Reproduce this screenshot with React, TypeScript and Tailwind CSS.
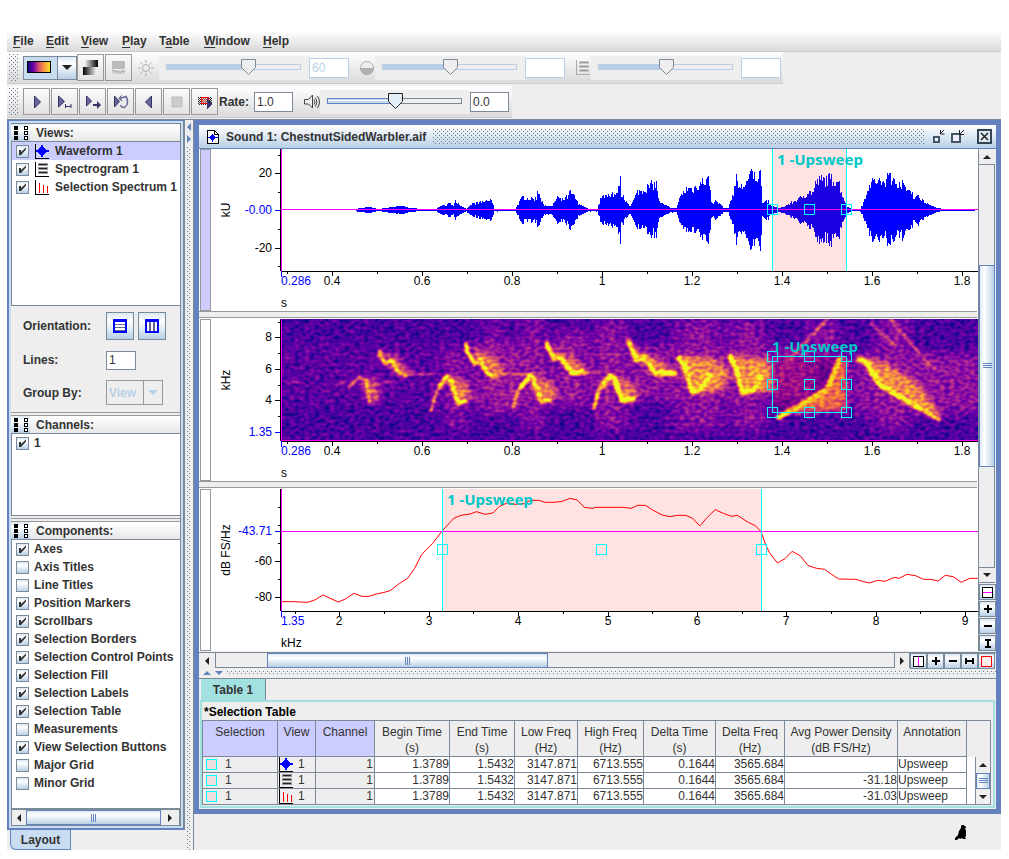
import type { ReactNode } from "react";

const FILL = "bg-[linear-gradient(#dde8f3,#ffffff_30%,#dde8f3_65%,#b8cfe5)]";
const FILL_X = "bg-[linear-gradient(90deg,#dde8f3,#ffffff_30%,#dde8f3_65%,#b8cfe5)]";
const DOTS =
  "bg-[conic-gradient(from_270deg_at_1px_1px,#6a7a8c_90deg,transparent_0),conic-gradient(from_270deg_at_1px_1px,#6a7a8c_90deg,transparent_0)] bg-[size:4px_4px] bg-[position:0_0,2px_2px]";
const BAR = "flex items-center border-b border-[#cccccc] bg-[linear-gradient(#ffffff,#dadada)]";

/* ---------- icons ---------- */

function WaveIcon() {
  return (
    <svg width="15" height="15" viewBox="0 0 15 15" shapeRendering="crispEdges" className="shrink-0">
      <path d="M.5 0v14.5H14" fill="none" stroke="#000" />
      <path d="M1 6h2V5h1V4h1V3h1V1h2v2h1v1h1v1h1v1h3v2h-3v1h-1v1H9v1H8v2H6v-2H5v-1H4V9H3V8H1z" fill="#00f" />
    </svg>
  );
}

function SpectroIcon({ dim = false }: { dim?: boolean }) {
  return (
    <svg width="15" height="15" viewBox="0 0 15 15" shapeRendering="crispEdges" className="shrink-0">
      <path d="M.5 0v14.5H14" fill="none" stroke={dim ? "#aaa" : "#000"} />
      <path d="M3 2.5h10M3 6.5h10M3 10.5h10" stroke={dim ? "#c8c8c8" : "#999"} strokeWidth="3" />
      <path d="M4 2.5h8M4 6.5h8M4 10.5h8" stroke={dim ? "#999" : "#222"} />
    </svg>
  );
}

function SpectrumIcon() {
  return (
    <svg width="15" height="15" viewBox="0 0 15 15" shapeRendering="crispEdges" className="shrink-0">
      <path d="M.5 0v14.5H14" fill="none" stroke="#000" />
      <path d="M4.5 3v10M8.500 5v8M12.500 6v7" stroke="#f00" />
    </svg>
  );
}

function Tri({ dir, color = "#222" }: { dir: "up" | "down" | "left" | "right"; color?: string }) {
  const d = {
    up: "M0 6h8L4 2z",
    down: "M0 2h8L4 6z",
    left: "M6 0v8L2 4z",
    right: "M2 0v8l4-4z",
  }[dir];
  return (
    <svg width="8" height="8" viewBox="0 0 8 8" className="shrink-0">
      <path d={d} fill={color} />
    </svg>
  );
}

function ListIcon() {
  return (
    <svg width="19" height="17" viewBox="0 0 19 17" shapeRendering="crispEdges">
      <path d="M3 2h4v4H3zM3 7h4v4H3zM3 12h4v4H3z" fill="#000" />
      <path d="M13.500 2.500h3v3h-3zM13.500 7.500h3v3h-3zM13.500 12.500h3v3h-3z" fill="#fff" stroke="#000" />
    </svg>
  );
}

/* ---------- controls ---------- */

function Check({ label, checked, icon, selected = false }: { label: string; checked: boolean; icon?: ReactNode; selected?: boolean }) {
  return (
    <label className={"flex h-[18px] items-center pl-1 whitespace-nowrap " + (selected ? "bg-[#ccccff]" : "")}>
      <span className="grid">
        <input
          type="checkbox"
          defaultChecked={checked}
          className={"peer col-start-1 row-start-1 size-[13px] appearance-none border border-[#7a8a99] " + FILL}
        />
        <svg width="13" height="13" viewBox="0 0 13 13" className="pointer-events-none invisible col-start-1 row-start-1 peer-checked:visible">
          <path d="M3 5h2v2l5-4.500v2L5 10H3z" fill="#333" />
        </svg>
      </span>
      {icon && <span className="ml-[6px]">{icon}</span>}
      <span className="ml-[5px]">{label}</span>
    </label>
  );
}

function Slider({ label, pos, active = false }: { label: string; pos: number; active?: boolean }) {
  return (
    <span className="grid h-6 w-[150px] bg-[#eeeeee]">
      <svg width="150" height="24" viewBox="0 0 150 24" className="col-start-1 row-start-1" shapeRendering="crispEdges">
        {active ? (
          <>
            <path d="M7.500 8.500h134v5H7.500z" fill="#eee" stroke="#7a8a99" />
            <path d={`M7.500 8.500H${pos}v5H7.500z`} fill="#c8dcf0" stroke="#6382bf" />
            <path d={`M8 10.500H${pos}`} stroke="#fff" />
          </>
        ) : (
          <>
            <path d="M7.500 8.500h134v5H7.500z" fill="#eee" stroke="#b8cfe5" />
            <path d={`M7 8H${pos}v6H7z`} fill="#b8cfe5" />
          </>
        )}
        <path
          d={`M${pos - 7} 3.500h14v8l-7 7-7-7z`}
          fill={active ? "#e4eef8" : "#eee"}
          stroke={active ? "#222" : "#7a8a99"}
          shapeRendering="auto"
        />
      </svg>
      <input type="range" aria-label={label} disabled={!active} className="col-start-1 row-start-1 h-6 w-full opacity-0" />
    </span>
  );
}

function ToolButton({ label, children }: { label: string; children: ReactNode }) {
  return (
    <button aria-label={label} className="mr-px grid size-[27px] place-items-center border border-[#999999] bg-[linear-gradient(#fafafa,#e2e2e2)]">
      {children}
    </button>
  );
}

function MiniButton({ label, children }: { label: string; children: ReactNode }) {
  return (
    <button aria-label={label} className={"grid h-4 w-[17px] shrink-0 place-items-center border border-[#7a8a99] " + FILL}>
      <svg width="13" height="13" viewBox="0 0 13 13" shapeRendering="crispEdges">
        {children}
      </svg>
    </button>
  );
}

const MINI = {
  splitV: (
    <>
      <path d="M1.500 1.500h10v10h-10z" fill="#fff" stroke="#000" />
      <path d="M6.500 2v9" stroke="#f0f" />
    </>
  ),
  splitH: (
    <>
      <path d="M1.500 1.500h10v10h-10z" fill="#fff" stroke="#000" />
      <path d="M2 6.500h9" stroke="#f0f" />
    </>
  ),
  plus: <path d="M3 6h8M7 2v8" stroke="#000" strokeWidth="2" />,
  minus: <path d="M3 6h8" stroke="#000" strokeWidth="2" />,
  fitH: <path d="M3 3v6M10 3v6M4 6h5" stroke="#000" strokeWidth="2" />,
  fitV: <path d="M4 3h6M4 10h6M7 4v5" stroke="#000" strokeWidth="2" />,
  red: <path d="M1.500 1.500h10v10h-10z" fill="#fee" stroke="#f00" />,
};

/* ---------- toolbars ---------- */

const MENUS = [
  ["", "F", "ile", "w-[33px]"],
  ["", "E", "dit", "w-[35px]"],
  ["", "V", "iew", "w-[41px]"],
  ["", "P", "lay", "w-[37px]"],
  ["T", "a", "ble", "w-[45px]"],
  ["", "W", "indow", "w-[59px]"],
  ["", "H", "elp", "w-[40px]"],
];

function MenuBar() {
  return (
    <nav className={BAR + " h-[21px] pl-[6px]"}>
      {MENUS.map(([pre, key, post, width]) => (
        <button key={key + post} className={"text-left " + width}>
          {pre}
          <u className="underline-offset-2">{key}</u>
          {post}
        </button>
      ))}
    </nav>
  );
}

function ColorBar() {
  return (
    <div className={BAR + " h-8 w-fit pr-[2px] pl-[2px]"}>
      <span className={"mr-1 h-7 w-[10px] " + DOTS} />
      <button aria-label="Color map" className="flex h-6 w-[54px] border border-[#7a8a99] bg-[#c8dcf0]">
        <span className="mt-1 ml-[3px] h-3 w-6 border border-black bg-[linear-gradient(90deg,#0d0887,#7201a8,#d8576b,#fb9f3a,#f5e326)]" />
        <span className={"ml-auto grid h-full w-[19px] place-items-center border-l border-[#7a8a99] " + FILL}>
          <svg width="10" height="5">
            <path d="M0 0h10L5 5z" fill="#222" />
          </svg>
        </span>
      </button>
      <ToolButton label="Grayscale">
        <svg width="15" height="15">
          <defs>
            <linearGradient id="g1">
              <stop stopColor="#fff" />
              <stop offset="1" />
            </linearGradient>
            <linearGradient id="g2">
              <stop />
              <stop offset="1" stopColor="#fff" />
            </linearGradient>
          </defs>
          <path d="M1 0h14v7H1z" fill="url(#g1)" />
          <path d="M0 7h14v8H0z" fill="url(#g2)" />
        </svg>
      </ToolButton>
      <ToolButton label="Smoothing">
        <svg width="15" height="15">
          <path d="M1 1h13v8H1z" fill="#bbb" />
          <path d="M1 10h13v4H1z" fill="#d2d2d2" />
          <path d="M1 11l2-1 2 2 2-1 2 2 2-2 3 1" fill="none" stroke="#aaa" />
        </svg>
      </ToolButton>
      <svg width="16" height="16" viewBox="0 0 16 16" className="mx-[5px]" fill="none" stroke="#b0b0b0">
        <circle cx="8" cy="8" r="3.500" />
        <path d="M8 0v3M8 13v3M0 8h3M13 8h3M2.500 2.500l2 2M11.500 11.500l2 2M13.500 2.500l-2 2M4.500 11.500l-2 2" />
      </svg>
      <Slider label="Brightness" pos={89.5} />
      <input aria-label="Brightness value" defaultValue="60" disabled className="h-5 w-10 border border-[#b8cfe5] bg-white pl-[2px] font-normal text-[#b8cfe5]" />
      <svg width="26" height="16" viewBox="0 0 26 16">
        <circle cx="18" cy="8" r="6.500" fill="#eee" stroke="#b0b0b0" />
        <path d="M11 8h14a7 7 0 0 1-14 0z" fill="#b0b0b0" />
      </svg>
      <Slider label="Contrast" pos={75.5} />
      <input aria-label="Contrast value" disabled className="h-5 w-10 border border-[#b8cfe5] bg-white" />
      <span className="w-[26px] pl-[11px]">
        <SpectroIcon dim />
      </span>
      <Slider label="Spectrogram window size" pos={75.5} />
      <input aria-label="Window size value" disabled className="h-5 w-10 border border-[#b8cfe5] bg-white" />
    </div>
  );
}

const PLAY = "#666699";

function PlayBar() {
  return (
    <div className={BAR + " mt-[2px] h-8 w-fit pr-[3px] pl-[2px]"}>
      <span className={"mr-1 h-7 w-[10px] " + DOTS} />
      <ToolButton label="Play">
        <svg width="16" height="16">
          <path d="M5.500 2v12l6-6z" fill={PLAY} stroke="#336" />
        </svg>
      </ToolButton>
      <ToolButton label="Play selection">
        <svg width="16" height="16">
          <path d="M1.500 2v11l6-5.500z" fill={PLAY} stroke="#336" />
          <path d="M8.500 10v4M8 12.500h6M14 10v4" stroke="#336" fill="none" />
        </svg>
      </ToolButton>
      <ToolButton label="Play visible">
        <svg width="16" height="16">
          <path d="M1.500 2v10l5-5z" fill={PLAY} stroke="#336" />
          <path d="M8 10h4V7l4 4-4 4v-3H8z" fill="#336" />
        </svg>
      </ToolButton>
      <ToolButton label="Loop">
        <svg width="16" height="16">
          <path d="M1.500 2v11l5-5.500z" fill={PLAY} stroke="#336" />
          <path d="M8.500 1.500L6 4.500l3 2.500" fill="none" stroke="#336" />
          <path d="M7 4.500l6-2c2 3 2.500 8-1 10.500-2 1-4 0-4.500-2" fill="none" stroke="#669" strokeWidth="1.500" />
        </svg>
      </ToolButton>
      <ToolButton label="Play backwards">
        <svg width="16" height="16">
          <path d="M10.500 2v12L4.500 8z" fill={PLAY} stroke="#336" />
        </svg>
      </ToolButton>
      <ToolButton label="Stop">
        <svg width="16" height="16">
          <path d="M3 3h10v10H3z" fill="#ccc" stroke="#bbb" />
        </svg>
      </ToolButton>
      <ToolButton label="Scrolling playback">
        <svg width="16" height="16" shapeRendering="crispEdges">
          <defs>
            <pattern id="chk" width="2" height="2" patternUnits="userSpaceOnUse">
              <path d="M0 0h1v1H0zM1 1h1v1H1z" fill="#222" />
            </pattern>
          </defs>
          <path d="M1 3h14v8H1z" fill="url(#chk)" />
          <path d="M4.500 3.500h7v6h-7z" fill="#f88" fillOpacity=".5" stroke="#f00" />
          <path d="M10 5v10l5-5z" fill="#336" />
        </svg>
      </ToolButton>
      <label className="flex items-center">
        <span className="w-[35px]">Rate:</span>
        <input defaultValue="1.0" className="h-5 w-[39px] border border-[#7a8a99] bg-white pl-[2px] font-normal text-[#333333]" />
      </label>
      <svg width="27" height="16" viewBox="0 0 27 16" fill="none" stroke="#444">
        <path d="M11.500 5.500h4L19.500 1v13l-4-4h-4z" fill="#eee" />
        <path d="M21 5.500q2 2.500 0 5M22.500 3.500q3 4.500 0 9M24.500 2q4 6 0 12" />
      </svg>
      <Slider label="Volume" pos={75.5} active />
      <input aria-label="Volume value" defaultValue="0.0" className="h-5 w-[39px] border border-[#7a8a99] bg-white pl-[2px] font-normal text-[#333333]" />
    </div>
  );
}

/* ---------- layout panel ---------- */

function SectionHead({ title }: { title: string }) {
  return (
    <div className="flex h-[17px] items-center bg-[linear-gradient(#ffffff,#e8e8e8)]">
      <span className={"w-[19px] " + FILL}>
        <ListIcon />
      </span>
      <span className="ml-[6px]">{title}</span>
    </div>
  );
}

const COMPONENTS: [string, boolean][] = [
  ["Axes", true],
  ["Axis Titles", false],
  ["Line Titles", false],
  ["Position Markers", true],
  ["Scrollbars", true],
  ["Selection Borders", true],
  ["Selection Control Points", true],
  ["Selection Fill", true],
  ["Selection Labels", true],
  ["Selection Table", true],
  ["Measurements", false],
  ["View Selection Buttons", true],
  ["Major Grid", false],
  ["Minor Grid", false],
];

const LIST = "border-y border-l border-[#7a8a99] bg-white";

function LayoutPanel() {
  return (
    <aside className="w-[178px] shrink-0">
      <div className="border-2 border-t border-[#6382bf] border-r-[#7a8a99] bg-[#c8dcf2] p-[2px]">
        <div className="border-t border-r border-[#7a8a99] bg-[#eeeeee]">
          <SectionHead title="Views:" />
          <div className={LIST + " h-[165px]"}>
            <Check label="Waveform 1" checked selected icon={<WaveIcon />} />
            <Check label="Spectrogram 1" checked icon={<SpectroIcon />} />
            <Check label="Selection Spectrum 1" checked icon={<SpectrumIcon />} />
          </div>
          <div className="h-[106px] space-y-[10px] pt-[6px] pl-3">
            <div className="flex h-7 items-center">
              <span className="w-[83px]">Orientation:</span>
              <button aria-label="Rows" className={"mr-1 grid size-7 place-items-center border border-[#7a8a99] " + FILL}>
                <svg width="14" height="14" shapeRendering="crispEdges">
                  <path d="M1 1h12v12H1z" fill="#fff" stroke="#00f" strokeWidth="2" />
                  <path d="M2 5.500h10M2 8.500h10M2 11.500h10" stroke="#669" />
                  <path d="M1 2h12" stroke="#00f" strokeWidth="2" />
                </svg>
              </button>
              <button aria-label="Columns" className={"grid size-7 place-items-center border border-[#7a8a99] " + FILL}>
                <svg width="14" height="14" shapeRendering="crispEdges">
                  <path d="M1 1h12v12H1z" fill="#fff" stroke="#00f" strokeWidth="2" />
                  <path d="M5 3v9M9 3v9" stroke="#669" strokeWidth="2" />
                  <path d="M1 2h12" stroke="#00f" strokeWidth="2" />
                </svg>
              </button>
            </div>
            <label className="flex h-5 items-center">
              <span className="w-[83px]">Lines:</span>
              <input defaultValue="1" className="h-[19px] w-[30px] border border-[#7a8a99] bg-white pl-[2px] font-normal" />
            </label>
            <label className="flex h-[25px] items-center">
              <span className="w-[83px]">Group By:</span>
              <span className="grid">
                <select disabled className="col-start-1 row-start-1 h-[25px] w-[57px] appearance-none border border-[#999999] bg-[#eeeeee] pl-[2px] font-bold text-[#b8cfe5] opacity-100">
                  <option>View</option>
                </select>
                <span className="pointer-events-none col-start-1 row-start-1 grid h-[25px] w-5 place-items-center justify-self-end border border-[#999999]">
                  <svg width="10" height="5">
                    <path d="M0 0h10L5 5z" fill="#b8cfe5" />
                  </svg>
                </span>
              </span>
            </label>
          </div>
          <div className="h-1 border-y border-[#999999]" />
          <SectionHead title="Channels:" />
          <div className={LIST + " h-[83px]"}>
            <Check label="1" checked />
          </div>
          <div className="mt-[2px] h-1 border-y border-[#999999]" />
          <SectionHead title="Components:" />
          <div className={LIST + " h-[270px]"}>
            {COMPONENTS.map(([label, on]) => (
              <Check key={label} label={label} checked={on} />
            ))}
          </div>
          <div className="flex h-[17px] border border-[#7a8a99]">
            <button aria-label="Scroll left" className="grid w-[14px] place-items-center">
              <Tri dir="left" />
            </button>
            <span className={"grid flex-1 place-items-center border border-[#6382bf] " + FILL}>
              <GripV />
            </span>
            <button aria-label="Scroll right" className="grid w-[18px] place-items-center">
              <Tri dir="right" />
            </button>
          </div>
        </div>
      </div>
      <button className="ml-[3px] block h-5 w-[61px] rounded-bl-md border border-t-0 border-[#6382bf] bg-[#c8dcf2]">Layout</button>
    </aside>
  );
}

function GripV() {
  return (
    <svg width="6" height="8" shapeRendering="crispEdges">
      <path d="M.5 0v8M2.500 0v8M4.500 0v8" stroke="#6382bf" />
    </svg>
  );
}

/* ---------- plots ---------- */

const LABEL = "font-['Noto_Sans',sans-serif] text-[15px] font-bold";

function AxisX({ y, start, ticks, minors, unit }: { y: number; start: string; ticks: [number, string][]; minors: number[]; unit: string }) {
  return (
    <g>
      <g shapeRendering="crispEdges" stroke="#000">
        <path d={`M281 ${y + 0.5}H978`} />
        {ticks.map(([x]) => (
          <path key={x} d={`M${x + 0.5} ${y}v5`} />
        ))}
        {minors.map((x) => (
          <path key={x} d={`M${x + 0.5} ${y}v3`} />
        ))}
        <path d={`M281.500 ${y}v6`} stroke="#00f" />
      </g>
      <text x="281" y={y + 14} fill="#00f">
        {start}
      </text>
      {ticks.map(([x, t]) => (
        <text key={x} x={x} y={y + 14} textAnchor="middle">
          {t}
        </text>
      ))}
      <text x="281" y={y + 36}>
        {unit}
      </text>
    </g>
  );
}

function AxisY({ y, h, ticks, minors, unit }: { y: number; h: number; ticks: [number, string, boolean?][]; minors: number[]; unit: string }) {
  return (
    <g>
      <g shapeRendering="crispEdges" stroke="#000">
        <path d={`M280.500 ${y}v${h}`} />
        <path d={`M281.500 ${y}v${h}`} stroke="#f0f" />
        {ticks.map(([ty, t, blue]) => (
          <path key={t} d={`M275 ${ty + 0.5}h5`} stroke={blue ? "#00f" : "#000"} />
        ))}
        {minors.map((ty) => (
          <path key={ty} d={`M278 ${ty + 0.5}h2`} />
        ))}
      </g>
      {ticks.map(([ty, t, blue]) => (
        <text key={t} x="272" y={ty + 4} textAnchor="end" fill={blue ? "#00f" : "#000"}>
          {t}
        </text>
      ))}
      <text transform={`translate(230 ${y + h / 2}) rotate(-90)`} textAnchor="middle">
        {unit}
      </text>
    </g>
  );
}

function Handle({ x, y }: { x: number; y: number }) {
  return <rect x={x - 4.5} y={y - 4.5} width="10" height="10" fill="none" stroke="#0ff" shapeRendering="crispEdges" />;
}

function Plot({ box, children, color, last = false }: { box: string; children: ReactNode; color: string; last?: boolean }) {
  return (
    <>
      <div className="flex bg-white pl-px">
        <span className={"w-[11px] shrink-0 border border-[#999999] " + color} />
        <svg viewBox={box} preserveAspectRatio="xMinYMin" className="h-[162px] min-w-0 flex-1 font-['Liberation_Sans',sans-serif] text-[12px] font-normal">
          {children}
        </svg>
      </div>
      {!last && (
        <div className="h-2 bg-white pb-px">
          <div className="mr-px h-full border-y border-[#999999] bg-[#eeeeee]" />
        </div>
      )}
    </>
  );
}

const TIME_TICKS: [number, string][] = [
  [332, "0.4"],
  [422, "0.6"],
  [512, "0.8"],
  [602, "1"],
  [692, "1.2"],
  [782, "1.4"],
  [872, "1.6"],
  [962, "1.8"],
];
const TIME_MINORS = [287, 377, 467, 557, 647, 737, 827, 917];

const ENVELOPE: [number, number][] = [
  [356, 0.5], [358, 1.5], [370, 2.5], [377, 0.5], [381, 1], [395, 3], [403, 3.5], [410, 1.2], [433, 0.5], [436, 1], [441, 4], [448, 6], [453, 6], [455, 11], [457, 7], [460, 4], [466, 1],
  [472, 7], [480, 8], [487, 11], [492, 9], [494, 1], [503, 1], [512, 0.5], [515, 1], [522, 14], [530, 12], [536, 13], [537, 21], [539, 21], [541, 9], [546, 4],
  [552, 4], [557, 15], [561, 10], [568, 15], [570, 21], [572, 15], [574, 15], [578, 6], [588, 1], [597, 1], [600, 12], [604, 16], [612, 19], [617, 16], [618, 32], [620, 32],
  [621, 18], [624, 12], [630, 4], [633, 10], [637, 20], [645, 24], [652, 28], [656, 29], [659, 8], [670, 2], [676, 2], [681, 17], [687, 24], [693, 24],
  [700, 30], [706, 34], [709, 33], [711, 8], [716, 10], [723, 2], [728, 2], [732, 16], [736, 34], [740, 24], [745, 30], [749, 34], [751, 44], [754, 38],
  [760, 40], [762, 9], [768, 10], [771, 4], [778, 1.5], [784, 3], [793, 9], [800, 13], [808, 20], [813, 20], [816, 32], [823, 34], [830, 35], [838, 34],
  [841, 20], [847, 3], [851, 1], [860, 1], [863, 8], [868, 28], [875, 33], [880, 32], [885, 26], [887, 42], [890, 42], [892, 32], [900, 31], [907, 22], [911, 23],
  [913, 14], [918, 15], [925, 9], [931, 4], [938, 1.2], [946, 0.6], [975, 0.5],
];

function buildWave() {
  let seed = 7;
  const rand = () => {
    seed = (seed * 16807) % 2147483647;
    return seed / 2147483647;
  };
  let k = 0;
  let d = "";
  for (let x = 356; x < 975; x++) {
    while (k < ENVELOPE.length - 2 && ENVELOPE[k + 1][0] <= x) k++;
    const [x0, a0] = ENVELOPE[k];
    const [x1, a1] = ENVELOPE[k + 1];
    const amp = a0 + ((a1 - a0) * (x - x0)) / (x1 - x0);
    const h = amp * (amp > 5 ? 0.66 + 0.4 * rand() : 1);
    d += `M${x}.5 ${(209.5 - h).toFixed(0)}V${(210.5 + h * (0.92 + 0.1 * rand())).toFixed(0)}`;
  }
  return d;
}
const WAVE = buildWave();

function WaveformPlot() {
  return (
    <Plot box="211 149 767 162" color="bg-[#ccccff]">
      <path d={WAVE} stroke="#00f" shapeRendering="crispEdges" />
      <path d="M773 149h74v122h-74z" fill="#f00" fillOpacity=".115" />
      <path d="M282 209.500H978" stroke="#f0f" shapeRendering="crispEdges" />
      <path d="M772.500 149v122M846.500 149v122" stroke="#0ff" shapeRendering="crispEdges" />
      <Handle x={772} y={209} />
      <Handle x={809} y={209} />
      <Handle x={846} y={209} />
      <text x="777" y="165" className={LABEL} fill="#00c8c8">
        1 -Upsweep
      </text>
      <AxisY y={149} h={122} unit="kU" ticks={[[173, "20"], [210, "-0.00", true], [248, "-20"]]} minors={[155, 192, 229, 266]} />
      <AxisX y={271} start="0.286" ticks={TIME_TICKS} minors={TIME_MINORS} unit="s" />
    </Plot>
  );
}

const NOTES_A = [
  ["M205 235L240 200 258 212 270 280", 9, 0.55],
  ["M452 305L470 245 500 200", 9, 0.68],
  ["M478 230L500 200 512 208 535 280 560 270", 13, 0.85],
  ["M698 295L715 240 750 198", 10, 0.75],
  ["M722 232L750 198 758 202 785 272 812 268", 14, 0.92],
  ["M942 298L955 245 992 200", 11, 0.8],
  ["M962 232L992 198 1002 205 1028 272 1066 264", 16, 0.95],
  ["M297 120L300 138 318 160 335 150 355 188 380 198", 11, 0.78],
  ["M380 194L465 190", 5, 0.4],
  ["M557 98L562 125 585 162 600 148 620 185 642 203", 13, 0.85],
  ["M642 192L800 190", 5, 0.45],
  ["M798 98L822 145 845 145 875 188 915 186", 14, 0.92],
  ["M915 188L970 186", 5, 0.5],
  ["M1045 90L1070 150 1092 140 1125 190 1190 190", 15, 0.92],
  ["M20 216L70 216M170 217L205 217M300 217L345 217", 5, 0.38],
] as const;

const NOTES_B = [
  ["M145 138L165 172 188 246 220 232 243 192", 15, 0.98],
  ["M298 135L320 182 338 248 375 235 392 195", 15, 0.98],
  ["M440 325L520 282 590 240 612 190 632 142", 15, 0.95],
  ["M680 146L712 156 728 190 752 225 820 266 875 298", 15, 1],
  ["M875 298L932 330", 12, 0.8],
  ["M475 150L595 25M778 25L850 110 915 180", 10, 0.36],
  ["M720 40L800 110", 9, 0.26],
] as const;

const GLOW_A =
  "M240 200L262 210 290 205 300 270 270 282zM500 200L560 215 580 265 535 285zM750 198L820 215 835 265 785 278zM992 198L1060 220 1080 262 1030 276z" +
  "M300 125L350 140 400 195 355 190 318 160zM560 105L640 140 675 190 640 205 600 150zM800 98L880 145 930 188 875 190 845 148z";
const GLOW_B =
  "M145 138L250 145 300 190 275 240 190 250zM298 135L420 150 430 240 338 250zM0 110L80 150 140 190 75 192zM450 318L590 240 635 140 650 150 650 300 470 310zM690 146L770 160 860 220 930 310 925 328 750 225z";
const HAZE =
  "M730 30h60v330h-60zM950 30h90v330h-90zM590 100h130v210H590zM830 60h90v230H830zM620 30h40v80h-40zM500 120h50v240h-50z" +
  "M1050 110h560v160H1050zM1210 30h110v330h-110zM1355 30h95v330h-95zM1790 30h90v330h-90zM1590 30h80v120h-80zM1720 130h400v180H1720zM1180 20h20v350h-20z";

function SpectrogramPlot() {
  return (
    <Plot box="211 319 767 162" color="bg-white">
      <defs>
        <clipPath id="sclip">
          <path d="M282 319h696v121H282z" />
        </clipPath>
        <filter id="haze" x="-10%" y="-20%" width="120%" height="140%">
          <feGaussianBlur stdDeviation="22 16" />
        </filter>
        <filter id="glow" x="-10%" y="-20%" width="120%" height="140%">
          <feGaussianBlur stdDeviation="9" />
        </filter>
        <filter id="line" x="-10%" y="-20%" width="120%" height="140%">
          <feGaussianBlur stdDeviation="3.4" />
        </filter>
        <filter id="plasma" filterUnits="userSpaceOnUse" x="282" y="319" width="696" height="122" colorInterpolationFilters="sRGB">
          <feTurbulence type="fractalNoise" baseFrequency="0.2 0.3" numOctaves="1" seed="4" />
          <feColorMatrix values="0 0 0 1.8 -0.4  0 0 0 1.8 -0.4  0 0 0 1.8 -0.4  0 0 0 0 1" result="noise" />
          <feComposite in="SourceGraphic" in2="noise" operator="arithmetic" k1="0.3" k2="0.85" k3="0.28" k4="-0.06" />
          <feComponentTransfer>
            <feFuncR type="table" tableValues=".05 .27 .45 .61 .74 .85 .93 .98 .99 .94" />
            <feFuncG type="table" tableValues=".03 .01 .004 .09 .22 .34 .47 .62 .79 .98" />
            <feFuncB type="table" tableValues=".53 .62 .66 .62 .53 .42 .33 .23 .15 .13" />
            <feFuncA type="linear" slope="0" intercept="1" />
          </feComponentTransfer>
        </filter>
      </defs>
      <g clipPath="url(#sclip)">
        <g filter="url(#plasma)">
          <path d="M270 310h720v140H270z" fill="#0c0c0c" />
          <g transform="translate(280 310) scale(0.33333)" fill="none" stroke="#fff" strokeLinejoin="round">
            <path d={HAZE} fill="#fff" fillOpacity=".18" stroke="none" filter="url(#haze)" />
            <path d="M0 100h1000v180H0z" fill="#fff" fillOpacity=".04" stroke="none" filter="url(#haze)" />
            <path d={GLOW_A} fill="#fff" fillOpacity=".48" stroke="none" filter="url(#glow)" />
            <g filter="url(#line)">
              {NOTES_A.map(([d, w, o]) => (
                <path key={d} d={d} strokeWidth={w} strokeOpacity={o} />
              ))}
            </g>
            <g transform="translate(1050 0)">
              <path d={GLOW_B} fill="#fff" fillOpacity=".56" stroke="none" filter="url(#glow)" />
              <g filter="url(#line)">
                {NOTES_B.map(([d, w, o]) => (
                  <path key={d} d={d} strokeWidth={w} strokeOpacity={o} />
                ))}
              </g>
            </g>
          </g>
        </g>
      </g>
      <path d="M772 356h75v56h-75z" fill="#f00" fillOpacity=".12" />
      <path d="M772.500 356.500h74v56h-74z" fill="none" stroke="#0ff" shapeRendering="crispEdges" />
      {[356, 384, 412].map((y) => [772, 809, 846].map((x) => <Handle key={x + y * 1000} x={x} y={y} />))}
      <text x="772" y="352" className={LABEL} fill="#00c8c8">
        1 -Upsweep
      </text>
      <path d="M281 440.500H978" stroke="#f0f" shapeRendering="crispEdges" />
      <AxisY y={319} h={122} unit="kHz" ticks={[[337, "8"], [369, "6"], [400, "4"], [432, "1.35", true]]} minors={[322, 353, 385, 416]} />
      <AxisX y={441} start="0.286" ticks={TIME_TICKS} minors={TIME_MINORS} unit="s" />
    </Plot>
  );
}

const SPECTRUM =
  "24,365 50,365 80,367 95,360 112,345 145,366 160,357 178,340 195,349 210,349 228,341 240,338 255,332 275,310 292,295 307,265 322,223 345,190 366,152 390,115 405,106 425,102 438,95 457,103 473,99 487,79 505,68 520,73 540,71 552,61 572,61 583,67 603,67 620,64 637,55 652,60 667,82 685,85 690,82 750,82 767,85 780,76 797,76 812,90 832,105 848,110 865,106 882,106 897,115 912,138 928,112 945,89 962,100 980,109 992,106 1015,127 1030,137 1042,155 1052,195 1060,218 1077,249 1093,236 1108,214 1125,227 1142,257 1160,265 1177,268 1192,283 1207,297 1243,298 1260,305 1272,309 1290,301 1305,304 1325,292 1335,295 1352,283 1370,287 1387,298 1402,298 1418,303 1433,286 1450,290 1467,307 1485,295 1502,295";

function SpectrumPlot() {
  return (
    <Plot box="211 489 767 162" color="bg-white" last>
      <path d="M443 489h319v122H443z" fill="#ffe2e2" />
      <polyline points={SPECTRUM} transform="translate(270 480) scale(0.4712 0.33333)" fill="none" stroke="#f00" vectorEffect="non-scaling-stroke" />
      <text x="447" y="505" className={LABEL} fill="#00c8c8">
        1 -Upsweep
      </text>
      <path d="M282 531.500H978" stroke="#f0f" shapeRendering="crispEdges" />
      <path d="M442.500 489v122M761.500 489v122" stroke="#0ff" shapeRendering="crispEdges" />
      <Handle x={442} y={549} />
      <Handle x={601} y={549} />
      <Handle x={761} y={549} />
      <AxisY y={489} h={122} unit="dB FS/Hz" ticks={[[531, "-43.71", true], [561, "-60"], [597, "-80"]]} minors={[507, 525, 543, 579]} />
      <AxisX
        y={611}
        start="1.35"
        ticks={[[339, "2"], [429, "3"], [518, "4"], [608, "5"], [697, "6"], [786, "7"], [876, "8"], [965, "9"]]}
        minors={[295, 384, 473, 563, 652, 742, 831, 920]}
        unit="kHz"
      />
    </Plot>
  );
}

/* ---------- table ---------- */

const COLUMNS: [string, string, string][] = [
  ["Selection", "", "w-[75px]"],
  ["View", "", "w-[38px]"],
  ["Channel", "", "w-[59px]"],
  ["Begin Time", "(s)", "w-[75px]"],
  ["End Time", "(s)", "w-[65px]"],
  ["Low Freq", "(Hz)", "w-[63px]"],
  ["High Freq", "(Hz)", "w-[66px]"],
  ["Delta Time", "(s)", "w-[72px]"],
  ["Delta Freq", "(Hz)", "w-[69px]"],
  ["Avg Power Density", "(dB FS/Hz)", "w-[113px]"],
  ["Annotation", "", ""],
];
const ROWS: [ReactNode, string][] = [
  [<WaveIcon key="w" />, ""],
  [<SpectroIcon key="s" />, "-31.18"],
  [<SpectrumIcon key="p" />, "-31.03"],
];
const VALUES = ["1.3789", "1.5432", "3147.871", "6713.555", "0.1644", "3565.684"];

function SelectionTable() {
  const cell = "h-4 border border-[#7a8a99] p-0 leading-[15px]";
  return (
    <div className="flex text-[12px] font-normal">
      <table className="min-w-0 flex-1 table-fixed border-collapse">
        <thead>
          <tr>
            {COLUMNS.map(([a, b, w], i) => (
              <th key={a} className={"h-9 border border-[#7a8a99] p-0 pt-[3px] align-top leading-4 font-normal whitespace-nowrap " + w + (i < 3 ? " bg-[#ccccff]" : "")}>
                <span className="block overflow-hidden">{a}</span>
                <span className="block">{b}</span>
              </th>
            ))}
          </tr>
        </thead>
        <tbody>
          {ROWS.map(([icon, power], r) => (
            <tr key={r} className="bg-white">
              <td className={cell + " bg-[#eeeeee]"}>
                <span className="flex items-center gap-2 pl-[3px]">
                  <i className="size-[11px] border border-[#00ffff] bg-[#eedddd]" />1
                </span>
              </td>
              <td className={cell + " bg-[#eeeeee]"}>
                <span className="flex h-[15px] items-center gap-1 pl-px">
                  {icon}1
                </span>
              </td>
              <td className={cell + " bg-[#eeeeee] pr-px text-right"}>1</td>
              {VALUES.map((v) => (
                <td key={v} className={cell + " text-right"}>
                  {v}
                </td>
              ))}
              <td className={cell + " text-right"}>{power}</td>
              <td className={cell}>Upsweep</td>
            </tr>
          ))}
        </tbody>
      </table>
      <div className="flex w-6 flex-col border-t border-r border-b border-[#7a8a99]">
        <div className="h-9" />
        <div className="flex flex-1 bg-white pl-2">
          <div className="flex flex-1 flex-col border-l border-[#7a8a99] bg-[#eeeeee]">
            <button aria-label="Scroll up" className="grid h-4 place-items-center">
              <Tri dir="up" />
            </button>
            <span className={"grid h-4 place-items-center border border-[#6382bf] " + FILL_X}>
              <svg width="9" height="6" shapeRendering="crispEdges">
                <path d="M0 .5h9M0 2.500h9M0 4.500h9" stroke="#6382bf" />
              </svg>
            </span>
            <button aria-label="Scroll down" className="grid flex-1 place-items-center">
              <Tri dir="down" />
            </button>
          </div>
        </div>
      </div>
    </div>
  );
}

/* ---------- sound window ---------- */

function TitleBar() {
  return (
    <header className="flex h-6 items-center border-b border-[#6382bf] bg-[linear-gradient(#ffffff,#dde8f3_50%,#b8cfe5)] pl-2">
      <svg width="12" height="14" viewBox="0 0 12 14" shapeRendering="crispEdges">
        <path d="M.5.5h7l4 4v9H.5z" fill="#fff" stroke="#000" />
        <path d="M7.500.5v4h4z" fill="#fff" stroke="#000" />
        <path d="M1 7h2V6h1V5h1V4h1v1h1v1h1v1h3v1H8v1H7v1H6v2H5v-2H4V9H3V8H1z" fill="#00f" />
      </svg>
      <h1 className="ml-[7px]">Sound 1: ChestnutSidedWarbler.aif</h1>
      <span className={"mx-[7px] h-4 flex-1 " + DOTS} />
      <button aria-label="Iconify" className="w-[18px]">
        <svg width="13" height="15" fill="none" stroke="#222">
          <path d="M2 8h5v5H2z" fill="#fff" stroke="#456" strokeWidth="2" />
          <path d="M12 1L8.500 4.500M8.500 1v4h4" />
        </svg>
      </button>
      <button aria-label="Restore" className="w-[27px]">
        <svg width="15" height="15" fill="none" stroke="#222">
          <path d="M2 5h8v8H2z" fill="#eef" stroke="#456" strokeWidth="2" />
          <path d="M14 1l-4 4M9.500 1v4.500h4.500" />
        </svg>
      </button>
      <button aria-label="Close" className="mr-1">
        <svg width="15" height="15">
          <path d="M1 1h13v13H1z" fill="#dde8f3" stroke="#345" strokeWidth="2" />
          <path d="M4 4l7 7M11 4l-7 7" stroke="#222" strokeWidth="1.500" />
        </svg>
      </button>
    </header>
  );
}

function SoundWindow() {
  return (
    <section className="border-[5px] border-[#6382bf] bg-[#eeeeee]">
      <TitleBar />
      <div className="flex">
        <div className="min-w-0 flex-1">
          <WaveformPlot />
          <SpectrogramPlot />
          <SpectrumPlot />
        </div>
        <div className="flex w-[18px] flex-col border-l border-[#7a8a99] pr-px">
          <button aria-label="Scroll up" className="grid h-4 place-items-center border-b border-[#7a8a99]">
            <Tri dir="up" />
          </button>
          <div className="h-[100px] border-r border-[#7a8a99]" />
          <div className={"grid h-[202px] place-items-center border border-[#6382bf] " + FILL_X}>
            <svg width="9" height="6" shapeRendering="crispEdges">
              <path d="M0 .5h9M0 2.500h9M0 4.500h9" stroke="#6382bf" />
            </svg>
          </div>
          <div className="flex-1 border-r border-[#7a8a99]" />
          <button aria-label="Scroll down" className="grid h-4 place-items-center border-y border-[#7a8a99]">
            <Tri dir="down" />
          </button>
          <div className="flex flex-col gap-px pt-px">
            <MiniButton label="Show vertical position">{MINI.splitH}</MiniButton>
            <MiniButton label="Zoom in vertically">{MINI.plus}</MiniButton>
            <MiniButton label="Zoom out vertically">{MINI.minus}</MiniButton>
            <MiniButton label="Fit vertically">{MINI.fitV}</MiniButton>
          </div>
        </div>
      </div>
      <div className="mt-px flex h-4 border-t border-[#7a8a99] pr-px">
        <button aria-label="Scroll left" className="grid w-[17px] place-items-center border-r border-[#7a8a99]">
          <Tri dir="left" />
        </button>
        <span className="w-[51px] border-b border-[#7a8a99]" />
        <span className={"grid w-[281px] place-items-center border border-[#6382bf] " + FILL}>
          <GripV />
        </span>
        <span className="flex-1 border-b border-[#7a8a99]" />
        <button aria-label="Scroll right" className="grid w-4 place-items-center border-x border-[#7a8a99]">
          <Tri dir="right" />
        </button>
        <MiniButton label="Show horizontal position">{MINI.splitV}</MiniButton>
        <MiniButton label="Zoom in horizontally">{MINI.plus}</MiniButton>
        <MiniButton label="Zoom out horizontally">{MINI.minus}</MiniButton>
        <MiniButton label="Fit horizontally">{MINI.fitH}</MiniButton>
        <MiniButton label="Fit selection">{MINI.red}</MiniButton>
      </div>
      <div className="flex h-[11px] items-center border-b border-[#7a8a99] pl-1">
        <Tri dir="up" color="#6382bf" />
        <span className="ml-1 flex">
          <Tri dir="down" color="#6382bf" />
        </span>
        <span className={"ml-1 h-1 flex-1 " + DOTS} />
      </div>
      <div className="pr-px pb-px pl-px">
        <button role="tab" aria-selected="true" className="ml-px block h-[21px] w-[65px] border-r border-[#7a8a99] bg-[#a3e1e1]">
          Table 1
        </button>
        <div className="border-2 border-[#a3e1e1] pr-[2px] pb-px">
          <h2 className="h-[18px] pl-[2px] leading-[20px] text-black">*Selection Table</h2>
          <SelectionTable />
        </div>
      </div>
    </section>
  );
}

export default function App() {
  return (
    <div className="min-h-screen bg-white pt-[31px] pr-2 pb-2 pl-[7px] font-['Liberation_Sans',Arial,sans-serif] text-[12px] leading-[14px] font-bold text-[#333333]">
      <div className="bg-[#eeeeee]">
        <MenuBar />
        <ColorBar />
        <PlayBar />
        <main className="mt-px flex border-t border-[#7a8a99]">
          <LayoutPanel />
          <div className="flex w-[9px] shrink-0 flex-col items-center gap-1 border-r border-[#7a8a99] pt-[3px]">
            <Tri dir="left" color="#6382bf" />
            <Tri dir="right" color="#6382bf" />
            <span className={"w-1 flex-1 " + DOTS} />
          </div>
          <div className="flex min-w-0 flex-1 flex-col">
            <SoundWindow />
            <div className="flex flex-1 items-center justify-end pr-[34px]">
              <svg width="12" height="15" viewBox="0 0 12 15">
                <path d="M6 1l1-1h2l1 1.500h1V3h-1l1 3v5l-1 1 1 2H8l-1-1-2 1-1-1-2 2H0v-2l3-3 1-4 2-3z" fill="#000" />
              </svg>
            </div>
          </div>
        </main>
      </div>
    </div>
  );
}
